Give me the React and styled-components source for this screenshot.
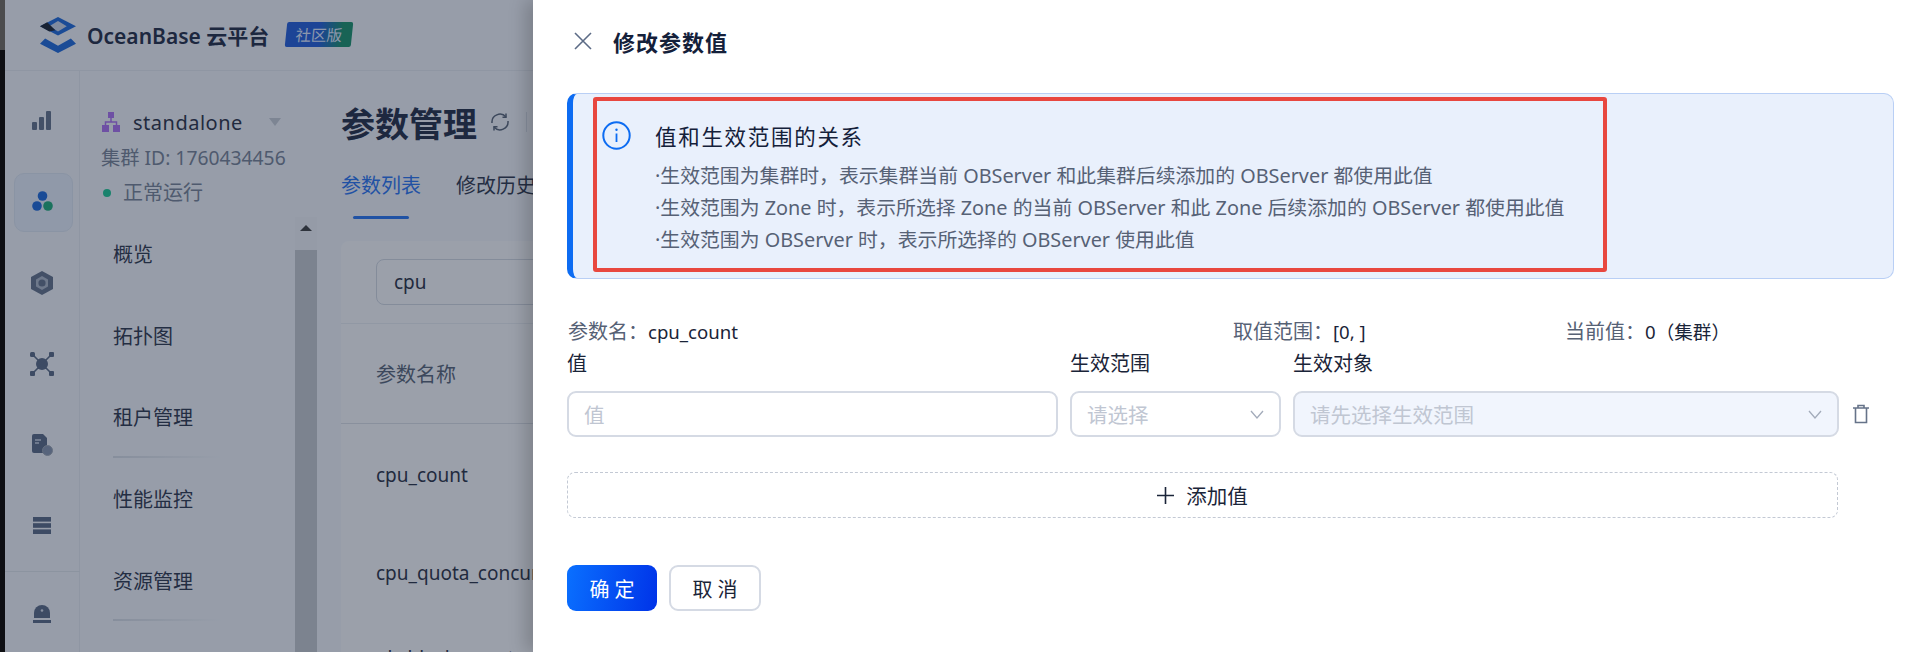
import React from 'react';
import styled, { createGlobalStyle } from 'styled-components';

const GlobalStyle = createGlobalStyle`
    html, body {
        margin: 0;
        padding: 0;
        background: #fff;
    }
    * {
        box-sizing: border-box;
    }
`;

const Page = styled.div`
    display: flex;
    width: 1920px;
    height: 652px;
    overflow: hidden;
    font-family: "Noto Sans", "Noto Sans CJK SC", sans-serif;
    color: #1a2438;
`;

const Strip = styled.div`
    width: 5px;
    flex: none;
    background: linear-gradient(#4c4c4e 0, #4c4c4e 50px, #0e0f13 50px);
`;

const Backdrop = styled.div`
    position: relative;
    width: 528px;
    height: 652px;
    flex: none;
    overflow: hidden;
    background: #f2f5fa;

    &::after {
        content: "";
        position: absolute;
        inset: 0;
        background: rgba(40, 50, 72, 0.45);
    }
`;

const Header = styled.div`
    display: flex;
    align-items: center;
    height: 71px;
    padding-left: 35px;
    border-bottom: 1px solid #e4e8ef;
`;

const Brand = styled.div`
    margin-left: 11px;
    font-size: 21px;
    font-weight: 600;
    white-space: nowrap;
    color: #14203a;
`;

const Badge = styled.div`
    display: flex;
    align-items: center;
    justify-content: center;
    width: 66px;
    height: 25px;
    margin-left: 17px;
    margin-bottom: 1px;
    font-size: 15.5px;
    color: #dfe8ff;
    background: linear-gradient(90deg, #1452d8 0, #1452d8 50%, #0b8a62 85%);
    transform: skewX(-6deg);
    border-radius: 2px;
`;

const Body = styled.div`
    display: flex;
    height: 581px;
`;

const Rail = styled.div`
    display: flex;
    flex-direction: column;
    align-items: center;
    width: 75px;
    flex: none;
    padding-top: 9px;
    border-right: 1px solid #e4e8ef;
`;

const RailItem = styled.div`
    display: flex;
    align-items: center;
    justify-content: center;
    width: 57px;
    height: ${props => props.$tall || 81}px;
    flex: none;
    position: relative;

    ${props => props.$active && `
        &::before {
            content: "";
            position: absolute;
            left: 0;
            top: 12px;
            width: 57px;
            height: 57px;
            border-radius: 10px;
            background: #e6edf9;
            border: 1px solid #dbe3f1;
        }
        svg { position: relative; }
    `}
`;

const RailDivider = styled.div`
    width: 75px;
    height: 1px;
    flex: none;
    margin-top: 5px;
    margin-bottom: 2px;
    background: #dfe3ea;
`;

const NavColumn = styled.div`
    display: flex;
    flex-direction: column;
    width: 237px;
    flex: none;
`;

const ClusterHead = styled.div`
    display: flex;
    flex-direction: column;
    height: 146px;
    padding: 36px 0 0 22px;
`;

const ClusterName = styled.div`
    display: flex;
    align-items: center;
    height: 30px;
    font-size: 20px;
    letter-spacing: 0.5px;
`;

const ClusterLabel = styled.span`
    margin-left: 13px;
`;

const Caret = styled.span`
    width: 0;
    height: 0;
    margin-left: 26px;
    border-left: 6px solid transparent;
    border-right: 6px solid transparent;
    border-top: 8px solid #c3c8d2;
`;

const ClusterId = styled.div`
    margin-top: 6px;
    margin-left: -1px;
    font-size: 19.3px;
    line-height: 30px;
    color: #6f7a8e;
    white-space: nowrap;
`;

const ClusterStatus = styled.div`
    display: flex;
    align-items: center;
    gap: 12px;
    margin-top: 5px;
    padding-left: 1px;
    font-size: 20px;
    line-height: 30px;
    color: #6f7a8e;

    &::before {
        content: "";
        width: 8px;
        height: 8px;
        border-radius: 50%;
        background: #0fc48c;
    }
`;

const NavBody = styled.div`
    display: flex;
    flex: 1;
    min-height: 0;
`;

const NavList = styled.div`
    display: flex;
    flex-direction: column;
    flex: 1;
    padding: 0 0 0 33px;
    margin-top: -4px;
`;

const NavItem = styled.div`
    display: flex;
    align-items: center;
    height: 81.6px;
    flex: none;
    font-size: 20px;
    color: #1f2a40;
    position: relative;

    ${props => props.$underline && `
        &::after {
            content: "";
            position: absolute;
            left: 0;
            bottom: 0;
            width: 108px;
            height: 2px;
            background: linear-gradient(90deg, #d4d9e2, #f2f5fa);
        }
    `}
`;

const ScrollBar = styled.div`
    display: flex;
    flex-direction: column;
    width: 22px;
    flex: none;
    margin-left: auto;
    background: #eef1f6;
`;

const ScrollUp = styled.div`
    display: flex;
    align-items: center;
    justify-content: center;
    height: 33px;
    flex: none;
    padding-bottom: 11px;

    &::before {
        content: "";
        border-left: 6px solid transparent;
        border-right: 6px solid transparent;
        border-bottom: 6px solid #333;
    }
`;

const ScrollThumb = styled.div`
    flex: 1;
    background: #c2c5cb;
`;

const Content = styled.div`
    flex: 1;
    min-width: 0;
    padding: 0 0 0 24px;
`;

const TitleRow = styled.div`
    display: flex;
    align-items: center;
    height: 52px;
    margin-top: 25px;
`;

const PageTitle = styled.div`
    font-size: 34px;
    font-weight: 700;
    color: #14203a;
    white-space: nowrap;
`;

const TitleDivider = styled.span`
    width: 1px;
    height: 20px;
    margin-left: 16px;
    flex: none;
    background: #d6dbe4;
`;

const TabRow = styled.div`
    display: flex;
    gap: 35px;
    height: 93px;
    align-items: flex-start;
    padding-top: 21px;
    white-space: nowrap;
`;

const Tab = styled.div`
    position: relative;
    font-size: 20px;
    line-height: 34px;
    color: ${props => (props.$active ? '#1a6cf0' : '#1f2a40')};

    ${props => props.$active && `
        &::after {
            content: "";
            position: absolute;
            left: 12px;
            right: 12px;
            top: 47px;
            height: 3px;
            border-radius: 2px;
            background: #1a6cf0;
        }
    `}
`;

const Card = styled.div`
    height: 420px;
    padding: 18px 0 0 35px;
    background: #f9fafc;
    border-radius: 8px 0 0 0;
`;

const SearchBox = styled.div`
    display: flex;
    align-items: center;
    height: 46px;
    width: 300px;
    padding-left: 17px;
    font-size: 19px;
    border: 1px solid #cfd5df;
    border-radius: 8px;
`;

const TableHead = styled.div`
    display: flex;
    align-items: center;
    height: 101px;
    margin: 18px 0 2px -35px;
    padding: 0 0 0 35px;
    font-size: 20px;
    color: #4e596d;
    white-space: nowrap;
    border-top: 1px solid #e8ebf0;
    border-bottom: 1px solid #d9dde4;
`;

const TableCell = styled.div`
    display: flex;
    align-items: center;
    height: ${props => props.$height || 98}px;
    font-size: 19px;
    white-space: nowrap;
    overflow: hidden;
`;

const Drawer = styled.div`
    flex: 1;
    min-width: 0;
    padding: 0 26px 0 34px;
    background: #fff;
    box-shadow: -8px 0 16px rgba(0, 0, 0, 0.18);
    position: relative;
`;

const DrawerHead = styled.div`
    display: flex;
    align-items: center;
    gap: 21px;
    height: 81px;
    padding-left: 7px;
`;

const DrawerTitle = styled.div`
    font-size: 22px;
    font-weight: 600;
    letter-spacing: 1px;
    color: #14203a;
`;

const Alert = styled.div`
    height: 186px;
    margin-top: 12px;
    padding: 3px 0 0 20px;
    background: #e9f0fc;
    border: 1px solid #b9cff5;
    border-left: 6px solid #0d6cf2;
    border-radius: 10px;
`;

const Highlight = styled.div`
    display: flex;
    gap: 24px;
    width: 1014px;
    height: 175px;
    padding: 20px 0 0 5px;
    border: 4px solid #e8473f;
    border-radius: 3px;
`;

const AlertText = styled.div`
    display: flex;
    flex-direction: column;
`;

const AlertTitle = styled.div`
    font-size: 21.5px;
    line-height: 32px;
    letter-spacing: 1.7px;
    margin-bottom: 7px;
    color: #14203a;
`;

const AlertLine = styled.div`
    font-size: 19.85px;
    line-height: 32px;
    color: #566175;
    white-space: nowrap;
`;

const MetaRow = styled.div`
    display: grid;
    grid-template-columns: 665px 332px 1fr;
    margin-top: 38px;
    padding-left: 1px;
    font-size: 20px;
    line-height: 30px;
`;

const MetaItem = styled.div`
    color: #566175;
    white-space: nowrap;

    b {
        font-weight: 400;
        font-size: 18.6px;
        color: #1a2438;
    }
`;

const FormGrid = styled.div`
    display: grid;
    grid-template-columns: 491px 211px 546px 46px;
    column-gap: 12px;
`;

const FieldLabel = styled.div`
    height: 44px;
    padding-top: 2px;
    font-size: 20px;
    line-height: 30px;
    color: #1a2438;
`;

const Field = styled.div`
    display: flex;
    align-items: center;
    justify-content: space-between;
    height: 46px;
    padding: 0 15px;
    font-size: 20.5px;
    color: #c0c6d2;
    background: ${props => (props.$disabled ? '#f1f5fd' : '#fff')};
    border: 2px solid #d5dae4;
    border-radius: 9px;
`;

const TrashCell = styled.div`
    display: flex;
    align-items: center;
`;

const TrashButton = styled.span`
    display: flex;
    margin-left: 1px;
`;

const AddButton = styled.div`
    display: flex;
    align-items: center;
    justify-content: center;
    gap: 12px;
    width: 1271px;
    height: 46px;
    margin-top: 35px;
    font-size: 20.5px;
    color: #1a2438;
    border: 1px dashed #c3c9d4;
    border-radius: 8px;
`;

const Actions = styled.div`
    display: flex;
    gap: 12px;
    margin-top: 47px;
`;

const ActionButton = styled.div`
    display: flex;
    align-items: center;
    justify-content: center;
    width: ${props => (props.$primary ? 90 : 92)}px;
    height: 46px;
    font-size: 20px;
    letter-spacing: 5px;
    padding-left: 5px;
    border-radius: 9px;
    color: ${props => (props.$primary ? '#fff' : '#1a2438')};
    background: ${props => (props.$primary ? 'linear-gradient(100deg, #0a70ff, #0033e8)' : '#fff')};
    border: ${props => (props.$primary ? 'none' : '2px solid #d5dae4')};
`;

function Logo() {
    return (
        <svg width="36" height="36" viewBox="0 0 35 35">
            <path d="M17.5 0 L35 9 L17.5 18 L0 9 Z" fill="#0f5fd8" />
            <path d="M17.5 4 L26 9 L17.5 14 L9 9 Z" fill="#c9d4e8" />
            <path d="M0 9 L7 5 L15 13 L9 14 Z" fill="#0c1424" />
            <path d="M0 26 L5 21 L17.5 28 L30 21 L35 26 L17.5 35 Z" fill="#0f5fd8" />
        </svg>
    );
}

function RailBars() {
    return (
        <svg width="20" height="20" viewBox="0 0 20 20" fill="#5a6882">
            <rect x="0" y="11" width="5" height="8" rx="1" />
            <rect x="7" y="6" width="5" height="13" rx="1" />
            <rect x="14" y="0" width="5" height="19" rx="1" />
        </svg>
    );
}

function RailCluster() {
    return (
        <svg width="21" height="21" viewBox="0 0 21 21">
            <circle cx="10.5" cy="5" r="4.8" fill="#0f5fd8" />
            <circle cx="5" cy="15" r="4.8" fill="#0f5fd8" />
            <circle cx="16" cy="15" r="4.8" fill="#0fa66f" />
        </svg>
    );
}

function RailHex() {
    return (
        <svg width="22" height="24" viewBox="0 0 22 24">
            <path d="M11 0 L22 6 L22 18 L11 24 L0 18 L0 6 Z" fill="#5a6882" />
            <path d="M11 5 L17 8.5 L17 15.5 L11 19 L5 15.5 L5 8.5 Z" fill="#a8b2c4" />
            <circle cx="11" cy="12" r="3.6" fill="#5a6882" />
        </svg>
    );
}

function RailNodes() {
    return (
        <svg width="24" height="24" viewBox="0 0 24 24" fill="#4f5f7c">
            <circle cx="12" cy="12" r="6" />
            <path d="M3 3 L21 21 M21 3 L3 21" stroke="#4f5f7c" strokeWidth="1.6" />
            <rect x="0" y="0" width="5" height="5" rx="1.5" />
            <rect x="19" y="0" width="5" height="5" rx="1" />
            <rect x="0" y="19" width="5" height="5" rx="1" />
            <rect x="19" y="19" width="5" height="5" rx="1" />
        </svg>
    );
}

function RailDoc() {
    return (
        <svg width="21" height="22" viewBox="0 0 21 22">
            <path d="M0 2 Q0 0 2 0 L11 0 L15 4 L15 19 L2 19 Q0 19 0 17 Z" fill="#4f5f7c" />
            <path d="M3 6 H9 M3 9 H7" stroke="#c6cede" strokeWidth="1.4" />
            <circle cx="15.5" cy="16.5" r="5" fill="#7f8da8" stroke="#98a1ae" />
        </svg>
    );
}

function RailStack() {
    return (
        <svg width="18" height="17" viewBox="0 0 18 17" fill="#4f5f7c">
            <rect x="0" y="0" width="18" height="4.6" />
            <rect x="0" y="6.2" width="18" height="4.6" />
            <rect x="0" y="12.4" width="18" height="4.6" />
        </svg>
    );
}

function RailAlarm() {
    return (
        <svg width="18" height="20" viewBox="0 0 18 20">
            <path d="M1 14 V9 A8 8 0 0 1 17 9 V14 Z" fill="#4f5f7c" />
            <circle cx="9" cy="6.5" r="1.3" fill="#d4dbe8" />
            <rect x="0" y="16" width="18" height="3" fill="#4f5f7c" />
        </svg>
    );
}

function TopologyIcon() {
    return (
        <svg width="18" height="20" viewBox="0 0 18 20" fill="#a868f0">
            <rect x="6" y="0" width="6" height="6" />
            <rect x="0" y="13" width="7" height="7" />
            <rect x="11" y="13" width="7" height="7" />
            <path d="M9 6 V10 M3.5 13 V10 H14.5 V13" fill="none" stroke="#a868f0" strokeWidth="1.5" />
        </svg>
    );
}

function RefreshIcon() {
    return (
        <svg width="20" height="20" viewBox="0 0 20 20" fill="none" stroke="#4e596d" strokeWidth="1.5" style={{ marginLeft: 13 }}>
            <path d="M2 11 A8 8 0 0 1 16 5" />
            <path d="M18 9 A8 8 0 0 1 4 15" />
            <path d="M16 1.5 V5.3 H12.5 M4 18.5 V14.7 H7.5" />
        </svg>
    );
}

function CloseIcon() {
    return (
        <svg width="18" height="18" viewBox="0 0 18 18" fill="none" stroke="#5c6b86" strokeWidth="1.6">
            <path d="M1 1 L17 17 M17 1 L1 17" />
        </svg>
    );
}

function InfoIcon() {
    return (
        <svg width="29" height="29" viewBox="0 0 29 29" fill="none" style={{ flex: 'none' }}>
            <circle cx="14.5" cy="14.5" r="13.2" stroke="#0d6cf2" strokeWidth="2" />
            <circle cx="14.5" cy="8.8" r="1.2" fill="#0d6cf2" />
            <path d="M14.5 12.5 V21" stroke="#0d6cf2" strokeWidth="1.8" />
        </svg>
    );
}

function ChevronIcon() {
    return (
        <svg width="14" height="9" viewBox="0 0 14 9" fill="none" stroke="#a3abba" strokeWidth="1.3">
            <path d="M1 1 L7 8 L13 1" />
        </svg>
    );
}

function TrashIcon() {
    return (
        <svg width="18" height="20" viewBox="0 0 18 20" fill="none" stroke="#667389" strokeWidth="1.6">
            <path d="M1 4 H17 M6 4 V1.5 H12 V4 M3.5 4 V18.5 H14.5 V4" />
        </svg>
    );
}

function PlusIcon() {
    return (
        <svg width="17" height="17" viewBox="0 0 17 17" fill="none" stroke="#1a2438" strokeWidth="1.6">
            <path d="M8.5 0 V17 M0 8.5 H17" />
        </svg>
    );
}

const railIcons = [RailCluster, RailHex, RailNodes, RailDoc, RailStack];

const alertLines = [
    '·生效范围为集群时，表示集群当前 OBServer 和此集群后续添加的 OBServer 都使用此值',
    '·生效范围为 Zone 时，表示所选择 Zone 的当前 OBServer 和此 Zone 后续添加的 OBServer 都使用此值',
    '·生效范围为 OBServer 时，表示所选择的 OBServer 使用此值',
];

const navItems = [
    { label: '概览' },
    { label: '拓扑图' },
    { label: '租户管理', underline: true },
    { label: '性能监控' },
    { label: '资源管理', underline: true },
];

function App() {
    return (
        <Page>
            <GlobalStyle />
            <Strip />
            <Backdrop>
                <Header>
                    <Logo />
                    <Brand>OceanBase 云平台</Brand>
                    <Badge>社区版</Badge>
                </Header>
                <Body>
                    <Rail>
                        <RailItem><RailBars /></RailItem>
                        {railIcons.map((Icon, i) => (
                            <RailItem key={i} $active={i === 0}><Icon /></RailItem>
                        ))}
                        <RailDivider />
                        <RailItem $tall={80}><RailAlarm /></RailItem>
                    </Rail>
                    <NavColumn>
                        <ClusterHead>
                            <ClusterName>
                                <TopologyIcon />
                                <ClusterLabel>standalone</ClusterLabel>
                                <Caret />
                            </ClusterName>
                            <ClusterId>集群 ID: 1760434456</ClusterId>
                            <ClusterStatus>正常运行</ClusterStatus>
                        </ClusterHead>
                        <NavBody>
                            <NavList>
                                {navItems.map(item => (
                                    <NavItem key={item.label} $underline={item.underline}>{item.label}</NavItem>
                                ))}
                            </NavList>
                            <ScrollBar>
                                <ScrollUp />
                                <ScrollThumb />
                            </ScrollBar>
                        </NavBody>
                    </NavColumn>
                    <Content>
                        <TitleRow>
                            <PageTitle>参数管理</PageTitle>
                            <RefreshIcon />
                            <TitleDivider />
                        </TitleRow>
                        <TabRow>
                            <Tab $active>参数列表</Tab>
                            <Tab>修改历史</Tab>
                        </TabRow>
                        <Card>
                            <SearchBox>cpu</SearchBox>
                            <TableHead>参数名称</TableHead>
                            <TableCell>cpu_count</TableCell>
                            <TableCell>cpu_quota_concurrency</TableCell>
                            <TableCell $height={71}>ob_block_count</TableCell>
                        </Card>
                    </Content>
                </Body>
            </Backdrop>
            <Drawer>
                <DrawerHead>
                    <CloseIcon />
                    <DrawerTitle>修改参数值</DrawerTitle>
                </DrawerHead>
                <Alert>
                    <Highlight>
                        <InfoIcon />
                        <AlertText>
                            <AlertTitle>值和生效范围的关系</AlertTitle>
                            {alertLines.map(line => (
                                <AlertLine key={line}>{line}</AlertLine>
                            ))}
                        </AlertText>
                    </Highlight>
                </Alert>
                <MetaRow>
                    <MetaItem>参数名：<b>cpu_count</b></MetaItem>
                    <MetaItem>取值范围：<b>[0, ]</b></MetaItem>
                    <MetaItem>当前值：<b>0（集群）</b></MetaItem>
                </MetaRow>
                <FormGrid>
                    <FieldLabel>值</FieldLabel>
                    <FieldLabel>生效范围</FieldLabel>
                    <FieldLabel>生效对象</FieldLabel>
                    <div />
                    <Field>值</Field>
                    <Field>请选择<ChevronIcon /></Field>
                    <Field $disabled>请先选择生效范围<ChevronIcon /></Field>
                    <TrashCell><TrashButton><TrashIcon /></TrashButton></TrashCell>
                </FormGrid>
                <AddButton>
                    <PlusIcon />
                    添加值
                </AddButton>
                <Actions>
                    <ActionButton $primary>确定</ActionButton>
                    <ActionButton>取消</ActionButton>
                </Actions>
            </Drawer>
        </Page>
    );
}

export default App;
